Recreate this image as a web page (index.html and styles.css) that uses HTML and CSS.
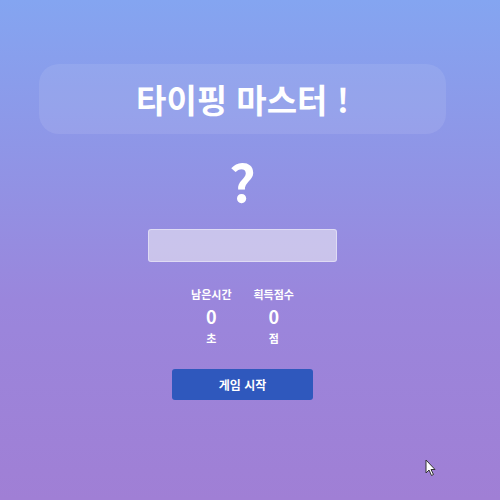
FILE: index.html
```html
<!DOCTYPE html>
<html lang="ko">
<head>
<meta charset="utf-8">
<link rel="stylesheet" href="styles.css">
</head>
<body>
<main class="app">
  <header class="title-box"><h1 class="title">타이핑 마스터 !</h1></header>
  <div class="word">?</div>
  <input class="word-input" type="text">
  <section class="stats">
    <div class="stat"><div class="label">남은시간</div><div class="value">0</div><div class="unit">초</div></div>
    <div class="stat"><div class="label">획득점수</div><div class="value">0</div><div class="unit">점</div></div>
  </section>
  <button class="start">게임 시작</button>
</main>
<svg class="cursor" width="12" height="18" viewBox="0 0 12 18"><path d="M1 1 L1 14 L4 11 L6.5 16.5 L8.5 15.5 L6 10.5 L10 10.5 Z" fill="#fff" stroke="#333" stroke-width="1"/></svg>
</body>
</html>
```
FILE: styles.css
```css
html, body { margin: 0; height: 100%; }
body {
  background: linear-gradient(180deg, #84a5f1 0%, #9a86dc 60%, #a07fd5 100%);
  font-family: "Noto Sans CJK KR", "Noto Sans", sans-serif;
  color: #fff;
  position: relative;
  overflow: hidden;
}
.app {
  width: 485px;
  display: flex;
  flex-direction: column;
  align-items: center;
  padding-top: 64px;
}
.title-box {
  width: 407px;
  height: 70px;
  border-radius: 20px;
  background: rgba(255,255,255,0.09);
  display: flex;
  align-items: center;
  justify-content: center;
}
.title { margin: 0; font-size: 33px; font-weight: 700; line-height: 1; }
.word { font-size: 52px; font-weight: 600; line-height: 52px; height: 52px; margin-top: 21px; }
.word-input {
  margin-top: 22px;
  width: 189px;
  height: 33px;
  box-sizing: border-box;
  border: 1px solid rgba(255,255,255,0.4);
  border-radius: 3px;
  background: rgba(222,218,240,0.72);
}
.stats { display: flex; gap: 22px; margin-top: 25px; }
.stat { display: flex; flex-direction: column; align-items: center; }
.label { font-size: 11px; font-weight: 700; line-height: 14px; }
.value { font-size: 18px; font-weight: 700; line-height: 20px; margin-top: 5px; }
.unit { font-size: 11px; font-weight: 700; line-height: 14px; margin-top: 5px; }
.start {
  margin-top: 24px;
  width: 141px;
  height: 31px;
  border: none;
  border-radius: 3px;
  background: #2f58bd;
  color: #fff;
  font-family: inherit;
  font-size: 12px;
  font-weight: 700;
}
.cursor { position: absolute; left: 425px; top: 459px; }
```
